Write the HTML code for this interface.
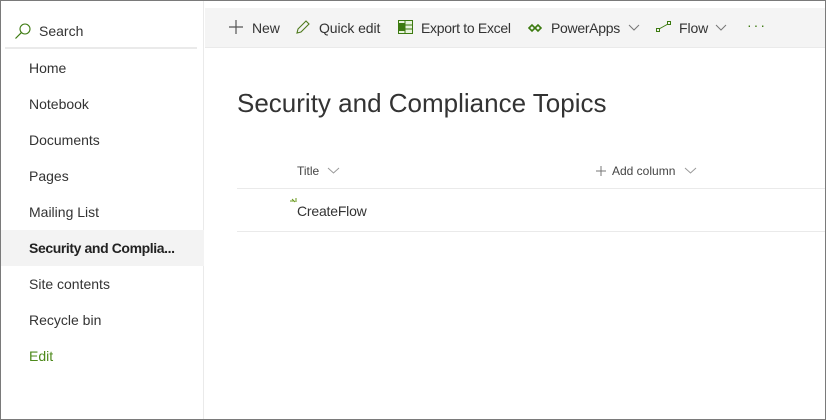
<!DOCTYPE html>
<html><head><style>
*{margin:0;padding:0;box-sizing:border-box}
body{width:826px;height:420px;overflow:hidden;font-family:"Liberation Sans",sans-serif;background:#fff;position:relative}
.frame{position:absolute;left:0;top:0;width:826px;height:420px;border:1px solid #7a7a7a;border-top-width:1px}
.nav{position:absolute;left:1px;top:1px;width:203px;height:418px;border-right:1px solid #eaeaea;background:#fff}
.search{position:absolute;left:4px;top:8px;width:192px;height:40px;border-bottom:2px solid #eaeaea;background:#fff}
.search span{position:absolute;left:34px;top:14px;font-size:14px;color:#333}
.item{position:absolute;left:0;width:203px;height:36px;font-size:14px;color:#333;padding-left:28px;line-height:36px}
.sel{background:#f3f3f3;font-weight:bold;color:#222;letter-spacing:-0.4px}
.bar{position:absolute;left:205px;top:8px;width:620px;height:40px;background:#f4f4f4;border-bottom:1px solid #eaeaea}
.cmd{position:absolute;top:12px;font-size:14px;color:#333;letter-spacing:-0.1px}
h1{position:absolute;left:237px;top:88px;font-size:26px;font-weight:normal;color:#333;letter-spacing:0px}
.hdr{position:absolute;top:164px;font-size:12px;color:#444}
.line{position:absolute;left:237px;width:588px;height:1px;background:#eaeaea}
</style></head><body>
<div class="nav">
 <div class="search">
  <svg style="position:absolute;left:9px;top:13px" width="18" height="18" viewBox="0 0 18 18"><circle cx="11" cy="7" r="5" fill="none" stroke="#3c7a10" stroke-width="1.1"/><line x1="7.3" y1="10.7" x2="1.5" y2="16.5" stroke="#3c7a10" stroke-width="1.2"/></svg>
  <span>Search</span>
 </div>
 <div class="item" style="top:49px">Home</div>
 <div class="item" style="top:85px">Notebook</div>
 <div class="item" style="top:121px">Documents</div>
 <div class="item" style="top:157px">Pages</div>
 <div class="item" style="top:193px">Mailing List</div>
 <div class="item sel" style="top:229px">Security and Complia...</div>
 <div class="item" style="top:265px">Site contents</div>
 <div class="item" style="top:301px">Recycle bin</div>
 <div class="item" style="top:337px;color:#4e8a1c">Edit</div>
</div>
<div class="bar">
 <svg style="position:absolute;left:23px;top:11px" width="16" height="16"><path d="M8 1v14M1 8h14" stroke="#555" stroke-width="1.2"/></svg>
 <span class="cmd" style="left:47px">New</span>
 <svg style="position:absolute;left:90px;top:11px" width="16" height="16"><path d="M2 14l1-4 8-8 3 3-8 8z" fill="none" stroke="#4e7a1c" stroke-width="1.1"/></svg>
 <span class="cmd" style="left:114px">Quick edit</span>
 <svg style="position:absolute;left:193px;top:12px" width="15" height="14"><rect x="0.5" y="0.5" width="14" height="13" fill="#e8f3dc" stroke="#3c7a10"/><path d="M7 1v12M7 5h7M7 9h7" stroke="#3c7a10"/><rect x="0" y="3" width="7" height="8" fill="#3c7a10"/></svg>
 <span class="cmd" style="left:216px;letter-spacing:-0.3px">Export to Excel</span>
 <svg style="position:absolute;left:323px;top:15px" width="14" height="10"><path d="M1 5l3-3 3 3-3 3zM7 5l3-3 3 3-3 3z" fill="none" stroke="#3c7a10" stroke-width="1.6"/></svg>
 <span class="cmd" style="left:346px;letter-spacing:-0.3px">PowerApps</span>
 <svg style="position:absolute;left:423px;top:16px" width="12" height="8"><path d="M1 1l5 5 5-5" fill="none" stroke="#777"/></svg>
 <svg style="position:absolute;left:451px;top:13px" width="16" height="12"><rect x="0.5" y="7.5" width="3" height="3" fill="none" stroke="#3c7a10"/><rect x="11.5" y="0.5" width="3" height="3" fill="none" stroke="#3c7a10"/><path d="M3 8l9-5" stroke="#3c7a10"/></svg>
 <span class="cmd" style="left:474px">Flow</span>
 <svg style="position:absolute;left:510px;top:16px" width="12" height="8"><path d="M1 1l5 5 5-5" fill="none" stroke="#777"/></svg>
 <span class="cmd" style="left:542px;top:9px;color:#3c7a10;letter-spacing:2px">···</span>
</div>
<h1>Security and Compliance Topics</h1>
<span class="hdr" style="left:297px">Title</span>
<svg style="position:absolute;left:327px;top:167px" width="13" height="8"><path d="M1 1l5.5 5 5.5-5" fill="none" stroke="#999"/></svg>
<svg style="position:absolute;left:596px;top:166px" width="10" height="10"><path d="M5 0v10M0 5h10" stroke="#777"/></svg>
<span class="hdr" style="left:612px">Add column</span>
<svg style="position:absolute;left:684px;top:167px" width="13" height="8"><path d="M1 1l5.5 5 5.5-5" fill="none" stroke="#999"/></svg>
<div class="line" style="top:188px"></div>
<svg style="position:absolute;left:290px;top:198px" width="8" height="7"><path d="M0 3h4M2 1l3 3M6 0v4" stroke="#6a9a1c"/></svg>
<span style="position:absolute;left:297px;top:203px;font-size:14px;color:#333;letter-spacing:-0.2px">CreateFlow</span>
<div class="line" style="top:231px"></div>
<div class="frame"></div>
</body></html>
